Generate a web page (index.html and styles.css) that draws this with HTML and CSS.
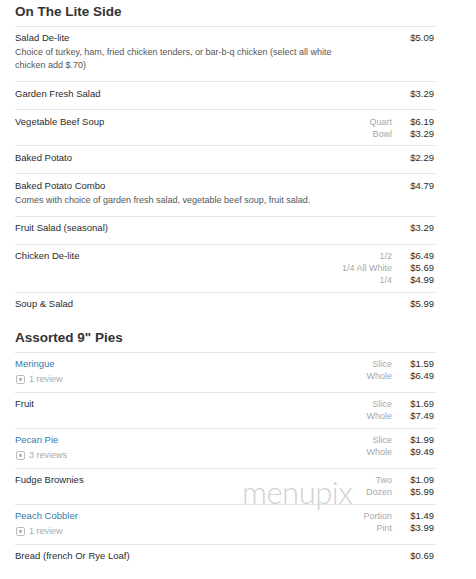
FILE: index.html
```html
<!DOCTYPE html>
<html lang="en">
<head>
  <meta charset="UTF-8" />
  <meta name="viewport" content="width=device-width, initial-scale=1.0" />
  <title>Menu</title>
  <link rel="stylesheet" href="styles.css">
</head>
<body>
  <div class="menu">
    <section class="menu-section">
      <h2 class="section-title">On The Lite Side</h2>
      <ul class="item-list">
        <li class="item">
          <div class="item-info">
            <div class="item-name">Salad De-lite</div>
            <div class="item-desc">Choice of turkey, ham, fried chicken tenders, or bar-b-q chicken (select all white chicken add $.70)</div>
          </div>
          <div class="item-prices">
            <span class="size"></span><span class="price">$5.09</span>
          </div>
        </li>
        <li class="item">
          <div class="item-info">
            <div class="item-name">Garden Fresh Salad</div>
          </div>
          <div class="item-prices">
            <span class="size"></span><span class="price">$3.29</span>
          </div>
        </li>
        <li class="item">
          <div class="item-info">
            <div class="item-name">Vegetable Beef Soup</div>
          </div>
          <div class="item-prices">
            <span class="size">Quart</span><span class="price">$6.19</span>
            <span class="size">Bowl</span><span class="price">$3.29</span>
          </div>
        </li>
        <li class="item">
          <div class="item-info">
            <div class="item-name">Baked Potato</div>
          </div>
          <div class="item-prices">
            <span class="size"></span><span class="price">$2.29</span>
          </div>
        </li>
        <li class="item">
          <div class="item-info">
            <div class="item-name">Baked Potato Combo</div>
            <div class="item-desc">Comes with choice of garden fresh salad, vegetable beef soup, fruit salad.</div>
          </div>
          <div class="item-prices">
            <span class="size"></span><span class="price">$4.79</span>
          </div>
        </li>
        <li class="item">
          <div class="item-info">
            <div class="item-name">Fruit Salad (seasonal)</div>
          </div>
          <div class="item-prices">
            <span class="size"></span><span class="price">$3.29</span>
          </div>
        </li>
        <li class="item">
          <div class="item-info">
            <div class="item-name">Chicken De-lite</div>
          </div>
          <div class="item-prices">
            <span class="size">1/2</span><span class="price">$6.49</span>
            <span class="size">1/4 All White</span><span class="price">$5.69</span>
            <span class="size">1/4</span><span class="price">$4.99</span>
          </div>
        </li>
        <li class="item">
          <div class="item-info">
            <div class="item-name">Soup &amp; Salad</div>
          </div>
          <div class="item-prices">
            <span class="size"></span><span class="price">$5.99</span>
          </div>
        </li>
      </ul>
    </section>

    <section class="menu-section">
      <h2 class="section-title">Assorted 9" Pies</h2>
      <ul class="item-list">
        <li class="item">
          <div class="item-info">
            <a class="item-name item-link" href="#">Meringue</a>
            <div class="item-reviews">
              <svg class="review-icon" width="9" height="9" viewBox="0 0 9 9"><rect x="0.5" y="0.5" width="8" height="8" rx="1.5" fill="none" stroke="#bbb"/><path d="M4.5 1.9 L5.15 3.61 L6.97 3.7 L5.55 4.84 L6.03 6.6 L4.5 5.6 L2.97 6.6 L3.45 4.84 L2.03 3.7 L3.85 3.61Z" fill="#aaa"/></svg>
              1 review
            </div>
          </div>
          <div class="item-prices">
            <span class="size">Slice</span><span class="price">$1.59</span>
            <span class="size">Whole</span><span class="price">$6.49</span>
          </div>
        </li>
        <li class="item">
          <div class="item-info">
            <div class="item-name">Fruit</div>
          </div>
          <div class="item-prices">
            <span class="size">Slice</span><span class="price">$1.69</span>
            <span class="size">Whole</span><span class="price">$7.49</span>
          </div>
        </li>
        <li class="item">
          <div class="item-info">
            <a class="item-name item-link" href="#">Pecan Pie</a>
            <div class="item-reviews">
              <svg class="review-icon" width="9" height="9" viewBox="0 0 9 9"><rect x="0.5" y="0.5" width="8" height="8" rx="1.5" fill="none" stroke="#bbb"/><path d="M4.5 1.9 L5.15 3.61 L6.97 3.7 L5.55 4.84 L6.03 6.6 L4.5 5.6 L2.97 6.6 L3.45 4.84 L2.03 3.7 L3.85 3.61Z" fill="#aaa"/></svg>
              3 reviews
            </div>
          </div>
          <div class="item-prices">
            <span class="size">Slice</span><span class="price">$1.99</span>
            <span class="size">Whole</span><span class="price">$9.49</span>
          </div>
        </li>
        <li class="item">
          <div class="item-info">
            <div class="item-name">Fudge Brownies</div>
          </div>
          <div class="item-prices">
            <span class="size">Two</span><span class="price">$1.09</span>
            <span class="size">Dozen</span><span class="price">$5.99</span>
          </div>
        </li>
        <li class="item">
          <div class="item-info">
            <a class="item-name item-link" href="#">Peach Cobbler</a>
            <div class="item-reviews">
              <svg class="review-icon" width="9" height="9" viewBox="0 0 9 9"><rect x="0.5" y="0.5" width="8" height="8" rx="1.5" fill="none" stroke="#bbb"/><path d="M4.5 1.9 L5.15 3.61 L6.97 3.7 L5.55 4.84 L6.03 6.6 L4.5 5.6 L2.97 6.6 L3.45 4.84 L2.03 3.7 L3.85 3.61Z" fill="#aaa"/></svg>
              1 review
            </div>
          </div>
          <div class="item-prices">
            <span class="size">Portion</span><span class="price">$1.49</span>
            <span class="size">Pint</span><span class="price">$3.99</span>
          </div>
        </li>
        <li class="item">
          <div class="item-info">
            <div class="item-name">Bread (french Or Rye Loaf)</div>
          </div>
          <div class="item-prices">
            <span class="size"></span><span class="price">$0.69</span>
          </div>
        </li>
      </ul>
    </section>

    <div class="watermark">menupix</div>
  </div>
</body>
</html>
```

FILE: styles.css
```css
* {
  box-sizing: border-box;
  margin: 0;
  padding: 0;
}

body {
  font-family: 'Liberation Sans', Arial, sans-serif;
  background-color: #fff;
  color: #333;
  overflow: hidden;
}

.menu {
  position: relative;
  width: 476px;
  padding: 3px 41px 0 15px;
}

.menu-section + .menu-section {
  margin-top: 9.5px;
}

.section-title {
  font-size: 13.5px;
  font-weight: bold;
  line-height: 18px;
  color: #333;
  margin-bottom: 4.5px;
}

.item-list {
  list-style: none;
}

.item {
  display: flex;
  justify-content: space-between;
  align-items: flex-start;
  border-top: 1px solid #e4e4e4;
  padding: 4.5px 0 5.5px;
}

.item-info {
  flex: 1;
  max-width: 345px;
  min-height: 17px;
}

.item-name {
  display: block;
  font-size: 9.5px;
  line-height: 13px;
  color: #2b2b2b;
}

.item-link {
  color: #3a78a6;
  text-decoration: none;
}

.item-desc {
  font-size: 9px;
  line-height: 13px;
  color: #555;
  margin: 2px 0 3.5px;
}

.item-reviews {
  display: flex;
  align-items: center;
  gap: 4px;
  margin-top: 3px;
  padding-left: 1px;
  font-size: 9px;
  line-height: 13px;
  color: #aaa;
}

.review-icon {
  display: block;
}

.item-prices {
  display: grid;
  grid-template-columns: auto 43px;
  line-height: 12px;
  padding-top: 1px;
}

.size {
  text-align: right;
  font-size: 9px;
  color: #a8a8a8;
}

.price {
  text-align: right;
  font-size: 9.5px;
  color: #2b2b2b;
  padding-right: 1px;
}

.watermark {
  position: absolute;
  left: 242px;
  top: 477px;
  font-family: Lato, 'Open Sans', sans-serif;
  font-weight: 300;
  font-size: 31px;
  line-height: 31px;
  letter-spacing: -0.5px;
  color: #d2d2d2;
  pointer-events: none;
}
```
